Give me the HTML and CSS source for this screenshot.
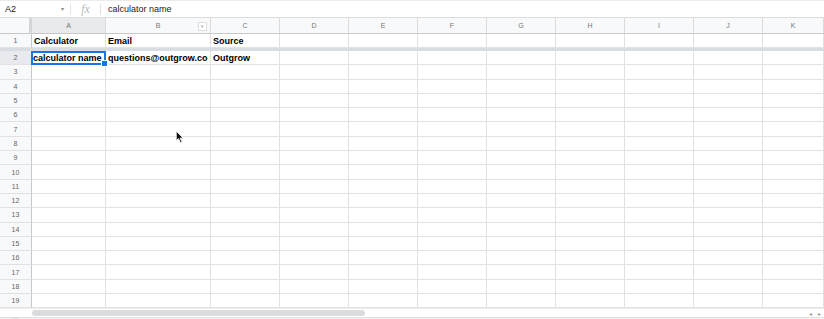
FILE: index.html
```html
<!DOCTYPE html>
<html>
<head>
  <title>Sheet</title>
  <link rel="stylesheet" href="styles.css">
</head>
<body>

  <div class="app">
    <!-- formula bar -->
    <div class="formula-bar">
      <div class="name-box">A2<span class="caret">▾</span></div>
      <div class="fx">fx</div>
      <div class="formula">calculator name</div>
    </div>

    <div class="sheet" id="sheet">
      <div class="corner"></div>
      <div class="col-head active">A</div>
      <div class="col-head">B<span class="filter">▾</span></div>
      <div class="col-head">C</div>
      <div class="col-head">D</div>
      <div class="col-head">E</div>
      <div class="col-head">F</div>
      <div class="col-head">G</div>
      <div class="col-head">H</div>
      <div class="col-head">I</div>
      <div class="col-head">J</div>
      <div class="col-head">K</div>

      <div class="row-head">1</div>
      <div class="cell bold">Calculator</div>
      <div class="cell bold">Email</div>
      <div class="cell bold">Source</div>
      <div class="cell"></div><div class="cell"></div><div class="cell"></div><div class="cell"></div>
      <div class="cell"></div><div class="cell"></div><div class="cell"></div><div class="cell"></div>

      <div class="freeze"></div>

      <div class="row-head active">2</div>
      <div class="cell bold selected">calculator name<span class="handle"></span></div>
      <div class="cell bold">questions@outgrow.co</div>
      <div class="cell bold">Outgrow</div>
      <div class="cell"></div><div class="cell"></div><div class="cell"></div><div class="cell"></div>
      <div class="cell"></div><div class="cell"></div><div class="cell"></div><div class="cell"></div>
    </div>

    <div class="hscroll">
      <div class="thumb"></div>
      <div class="arrows"><span>◂</span><span>▸</span></div>
    </div>

    <div class="tabs">
      <div class="add"></div>
      <div class="tab"></div>
    </div>

    <!-- mouse pointer -->
    <svg class="pointer" width="10" height="14" viewBox="0 0 9 13">
      <path d="M1 1 L1 10 L3 8 L5 12 L6.5 11.3 L4.6 7.6 L7.5 7.6 Z" fill="#111" stroke="#fff" stroke-width="0.8"/>
    </svg>
  </div>

  <script>
    // empty rows 3..19
    const sheet = document.getElementById("sheet");
    for (let r = 3; r <= 19; r++) {
      let html = `<div class="row-head">${r}</div>`;
      for (let c = 0; c < 11; c++) html += `<div class="cell"></div>`;
      sheet.innerHTML += html;
    }
  </script>

</body>
</html>
```

FILE: styles.css
```css
body {
  margin: 0;
  font-family: "Liberation Sans", Arial, sans-serif;
  background: #fff;
  overflow: hidden;
}
.app {
  position: relative;
  width: 824px;
  height: 319px;
  overflow: hidden;
}
.formula-bar {
  display: flex;
  align-items: center;
  height: 16px;
  border-top: 1px solid #ececec;
  border-bottom: 1px solid #dcdcdc;
  font-size: 9px;
  color: #222;
}
.name-box {
  width: 71px;
  padding-left: 5px;
  box-sizing: border-box;
  display: flex;
  justify-content: space-between;
  border-right: 1px solid #e3e3e3;
  height: 11px;
  line-height: 11px;
}
.caret {
  font-size: 6px;
  color: #888;
  margin-right: 6px;
}
.fx {
  width: 29px;
  text-align: center;
  font-family: "Liberation Serif", serif;
  font-style: italic;
  font-size: 12px;
  color: #b8b8b8;
  border-right: 1px solid #e3e3e3;
  height: 11px;
  line-height: 10px;
}
.formula {
  padding-left: 7px;
}
.sheet {
  display: grid;
  grid-template-columns: 32px 74px 105px 69px 69px 69px 69px 69px 69px 69px 69px 61px;
  grid-template-rows: 16px 14px 3px;
  grid-auto-rows: 14.3px;
}
.corner {
  background: #f8f9fa;
  border-bottom: 1px solid #c8c8c8;
  border-right: 3px solid #d4d6d9;
  box-sizing: border-box;
}
.col-head {
  position: relative;
  background: #f8f9fa;
  border-right: 1px solid #dadada;
  border-bottom: 1px solid #c8c8c8;
  box-sizing: border-box;
  font-size: 7px;
  color: #777;
  text-align: center;
  line-height: 15px;
}
.col-head.active, .row-head.active {
  background: #e8eaed;
}
.filter {
  position: absolute;
  right: 3px;
  top: 4px;
  width: 7px;
  height: 7px;
  border: 1px solid #ddd;
  font-size: 5px;
  line-height: 7px;
  color: #aaa;
  background: #fff;
}
.row-head {
  background: #f8f9fa;
  border-right: 1px solid #c8c8c8;
  border-bottom: 1px solid #e2e2e2;
  box-sizing: border-box;
  font-size: 7px;
  color: #666;
  text-align: center;
  display: flex;
  align-items: center;
  justify-content: center;
}
.cell {
  position: relative;
  border-right: 1px solid #e2e2e2;
  border-bottom: 1px solid #e2e2e2;
  box-sizing: border-box;
  font-size: 9px;
  color: #000;
  padding-left: 2px;
  white-space: nowrap;
  overflow: visible;
  display: flex;
  align-items: center;
}
.bold {
  font-weight: bold;
}
.selected {
  border: 2px solid #1a73e8;
  padding-left: 0;
  z-index: 2;
  margin-left: -1px;
}
.handle {
  position: absolute;
  right: -4px;
  bottom: -4px;
  width: 5px;
  height: 5px;
  background: #1a73e8;
  border: 1px solid #fff;
}
.freeze {
  grid-column: 1 / -1;
  background: #d9dce0;
}
.hscroll {
  display: flex;
  align-items: center;
  justify-content: space-between;
  height: 8px;
  padding-left: 32px;
  background: #fff;
  border-top: 1px solid #ededed;
}
.thumb {
  width: 333px;
  height: 6px;
  border-radius: 3px;
  background: #dadce0;
}
.arrows {
  display: flex;
  gap: 6px;
  font-size: 6px;
  color: #999;
  padding-right: 3px;
}
.tabs {
  position: relative;
  height: 6px;
  background: #f1f3f4;
  border-top: 1px solid #e0e0e0;
}
.add {
  position: absolute;
  left: 6px;
  top: 1px;
  width: 18px;
  height: 18px;
  border-radius: 50%;
  background: #fff;
  box-shadow: 0 0 2px rgba(0,0,0,0.3);
}
.tab {
  position: absolute;
  left: 80px;
  top: 1px;
  width: 64px;
  height: 10px;
  background: #fff;
}
.pointer {
  position: absolute;
  left: 175px;
  top: 130px;
}
```
